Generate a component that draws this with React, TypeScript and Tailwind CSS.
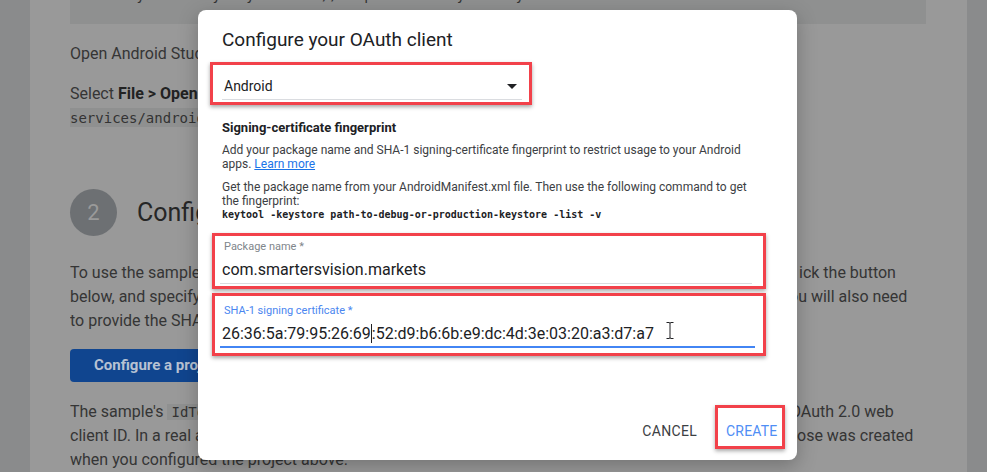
import React from "react";

const bgText = "text-[16px] leading-[24px] text-[#353535]";

function Line({ left, right, rightStart }: { left: React.ReactNode; right?: string; rightStart?: number }) {
  return (
    <div className={`flex whitespace-nowrap ${bgText}`}>
      <div className="overflow-hidden" style={{ width: rightStart ? rightStart - 70 : undefined }}>
        {left}
      </div>
      {right && <div>{right}</div>}
    </div>
  );
}

export default function App() {
  return (
    <div
      className="relative w-[987px] h-[472px] overflow-hidden flex bg-[#999999]"
      style={{ fontFamily: "Roboto, 'Liberation Sans', sans-serif" }}
    >
      <div className="w-[30px] shrink-0 bg-[#8a8b8c]" />
      <div className="w-[937px] shrink-0 bg-[#999999] pl-[40px] pr-[41px] flex flex-col">
        {/* top code box */}
        <div className="h-[27px] bg-[#8f9090] overflow-hidden">
          <div
            className="mt-[-14px] pl-[16px] text-[14px] leading-[18px] text-[#333]"
            style={{ fontFamily: "'DejaVu Sans Mono', monospace" }}
          >
            &nbsp;&nbsp;&nbsp;&nbsp;keyAlias 'my-key-alias' // replace with your key
          </div>
        </div>
        <div className={`mt-[18px] ${bgText}`}>Open Android Studio.</div>
        <div className={`mt-[16px] ${bgText}`}>
          Select <b className="font-bold text-[#222]">File &gt; Open</b> and choose the project directory:
        </div>
        <div className="mt-[2px] h-[21px] w-[400px] bg-[#8f9090] flex items-center">
          <span
            className="text-[14px] leading-[18px] text-[#333]"
            style={{ fontFamily: "'DejaVu Sans Mono', monospace" }}
          >
            services/android/sample
          </span>
        </div>
        <div className="mt-[62px] flex items-center gap-[20px]">
          <div className="w-[47px] h-[47px] rounded-full bg-[#6d7073] flex items-center justify-center text-[22px] text-[#9a9a9a]">
            2
          </div>
          <div className="text-[25px] text-[#262626]">Configure a project</div>
        </div>
        <div className="mt-[25px]">
          <Line left="To use the sample app, you need a Google API Console project." right="ick the button" rightStart={799} />
          <Line left="below, and specify the package name of the sample app." right="ou will also need" rightStart={789} />
          <Line left="to provide the SHA-1 hash of your signing certificate." />
        </div>
        <div className="mt-[16px] w-[300px] h-[36px] rounded-[4px] bg-[#10458f] flex items-center pl-[24px] text-[15px] font-bold text-[#b7c2d3]">
          Configure a project
        </div>
        <div className="mt-[18px]">
          <div className={`flex whitespace-nowrap ${bgText}`}>
            <div className="w-[720px] overflow-hidden">
              The sample's{" "}
              <span
                className="bg-[#8f9090] px-[4px] text-[14px] text-[#333]"
                style={{ fontFamily: "'DejaVu Sans Mono', monospace" }}
              >
                IdTokenActivity
              </span>{" "}
              requests an ID token for the
            </div>
            <div>OAuth 2.0 web</div>
          </div>
          <Line left="client ID. In a real app, you would use the client ID" right="ose was created" rightStart={797} />
          <Line left="when you configured the project above." />
        </div>
      </div>
      <div className="w-[20px] shrink-0 bg-[#8a8b8c]" />

      {/* Dialog */}
      <div className="absolute left-[198px] top-[10px] w-[599px] h-[450px] bg-white rounded-[8px] shadow-[0_6px_20px_rgba(0,0,0,0.25)] flex flex-col px-[24px]">
        <div className="pt-[18px] text-[19px] leading-[24px] text-[#202124]">Configure your OAuth client</div>

        {/* select */}
        <div className="mt-[10px] ml-[-12px] w-[322px] h-[43px] border-[3px] border-[#f2414a] shadow-[0_2px_4px_rgba(0,0,0,0.35)] pl-[9px] pr-[7px]">
          <div className="h-[35px] border-b border-[#dadce0] flex items-start justify-between">
            <span className="pt-[13px] pl-[2px] text-[14px] leading-[16px] text-[#202124]">Android</span>
            <svg width="10" height="5" viewBox="0 0 10 5" className="mt-[19px] mr-[5px]">
              <path d="M0 0 L10 0 L5 5 Z" fill="#202124" />
            </svg>
          </div>
        </div>

        <div className="mt-[15px] text-[13px] leading-[16px] font-bold text-[#202124]">Signing-certificate fingerprint</div>
        <div className="mt-[7px] text-[12px] leading-[14px] text-[#3c4043] whitespace-nowrap">
          Add your package name and SHA-1 signing-certificate fingerprint to restrict usage to your Android
          <br />
          apps. <span className="text-[#1a73e8] underline">Learn more</span>
        </div>
        <div className="mt-[10px] text-[12px] leading-[13.5px] text-[#3c4043] whitespace-nowrap">
          Get the package name from your AndroidManifest.xml file. Then use the following command to get
          <br />
          the fingerprint:
          <br />
          <span
            className="font-bold text-[10px] text-[#202124]"
            style={{ fontFamily: "'DejaVu Sans Mono', monospace" }}
          >
            keytool -keystore path-to-debug-or-production-keystore -list -v
          </span>
        </div>

        {/* package name */}
        <div className="mt-[11px] ml-[-10px] w-[554px] h-[56px] border-[3px] border-[#f2414a] shadow-[0_2px_4px_rgba(0,0,0,0.35)] pl-[5px] pr-[11px]">
          <div className="h-[48px] border-b border-[#dadce0] flex flex-col">
            <div className="pt-[5px] pl-[4px] text-[11px] leading-[12px] text-[#80868b]">Package name *</div>
            <div className="mt-[7px] pl-[2px] text-[16px] leading-[20px] text-[#202124]">com.smartersvision.markets</div>
          </div>
        </div>

        {/* SHA-1 */}
        <div className="relative mt-[4px] ml-[-10px] w-[554px] h-[63px] border-[3px] border-[#f2414a] shadow-[0_2px_4px_rgba(0,0,0,0.35)] pl-[5px] pr-[8px]">
          <div className="h-[52px] border-b-2 border-[#4285f4] flex flex-col">
            <div className="pt-[8px] pl-[4px] text-[11px] leading-[14px] text-[#4a86f0]">SHA-1 signing certificate *</div>
            <div className="mt-[6px] pl-[2px] text-[16px] leading-[20px] text-[#202124] whitespace-nowrap">
              26:36:5a:79:95:26:69
              <span className="inline-block w-[1px] h-[19px] bg-[#202124] align-[-4px]" />
              :52:d9:b6:6b:e9:dc:4d:3e:03:20:a3:d7:a7
            </div>
          </div>
          <svg width="8" height="17" viewBox="0 0 8 17" className="absolute left-[451px] top-[26px]">
            <path d="M0.5 0.5 H3 Q4 0.5 4 1.5 Q4 0.5 5 0.5 H7.5 M4 1.5 V15.5 M0.5 16.5 H3 Q4 16.5 4 15.5 Q4 16.5 5 16.5 H7.5" stroke="#202124" strokeWidth="1" fill="none" />
          </svg>
        </div>

        {/* buttons */}
        <div className="mt-auto mb-[11px] mr-[-12px] flex justify-end items-end">
          <div className="mb-[10px] mr-[18px] text-[14px] leading-[16px] font-normal tracking-[0.3px] text-[#3c4043]">CANCEL</div>
          <div className="w-[70px] h-[44px] border-[3px] border-[#f2414a] shadow-[0_2px_4px_rgba(0,0,0,0.35)] pl-[8px] pt-[15px]">
            <div className="text-[14px] leading-[16px] font-normal tracking-[0.2px] text-[#4f8ef5]">CREATE</div>
          </div>
        </div>
      </div>
    </div>
  );
}
